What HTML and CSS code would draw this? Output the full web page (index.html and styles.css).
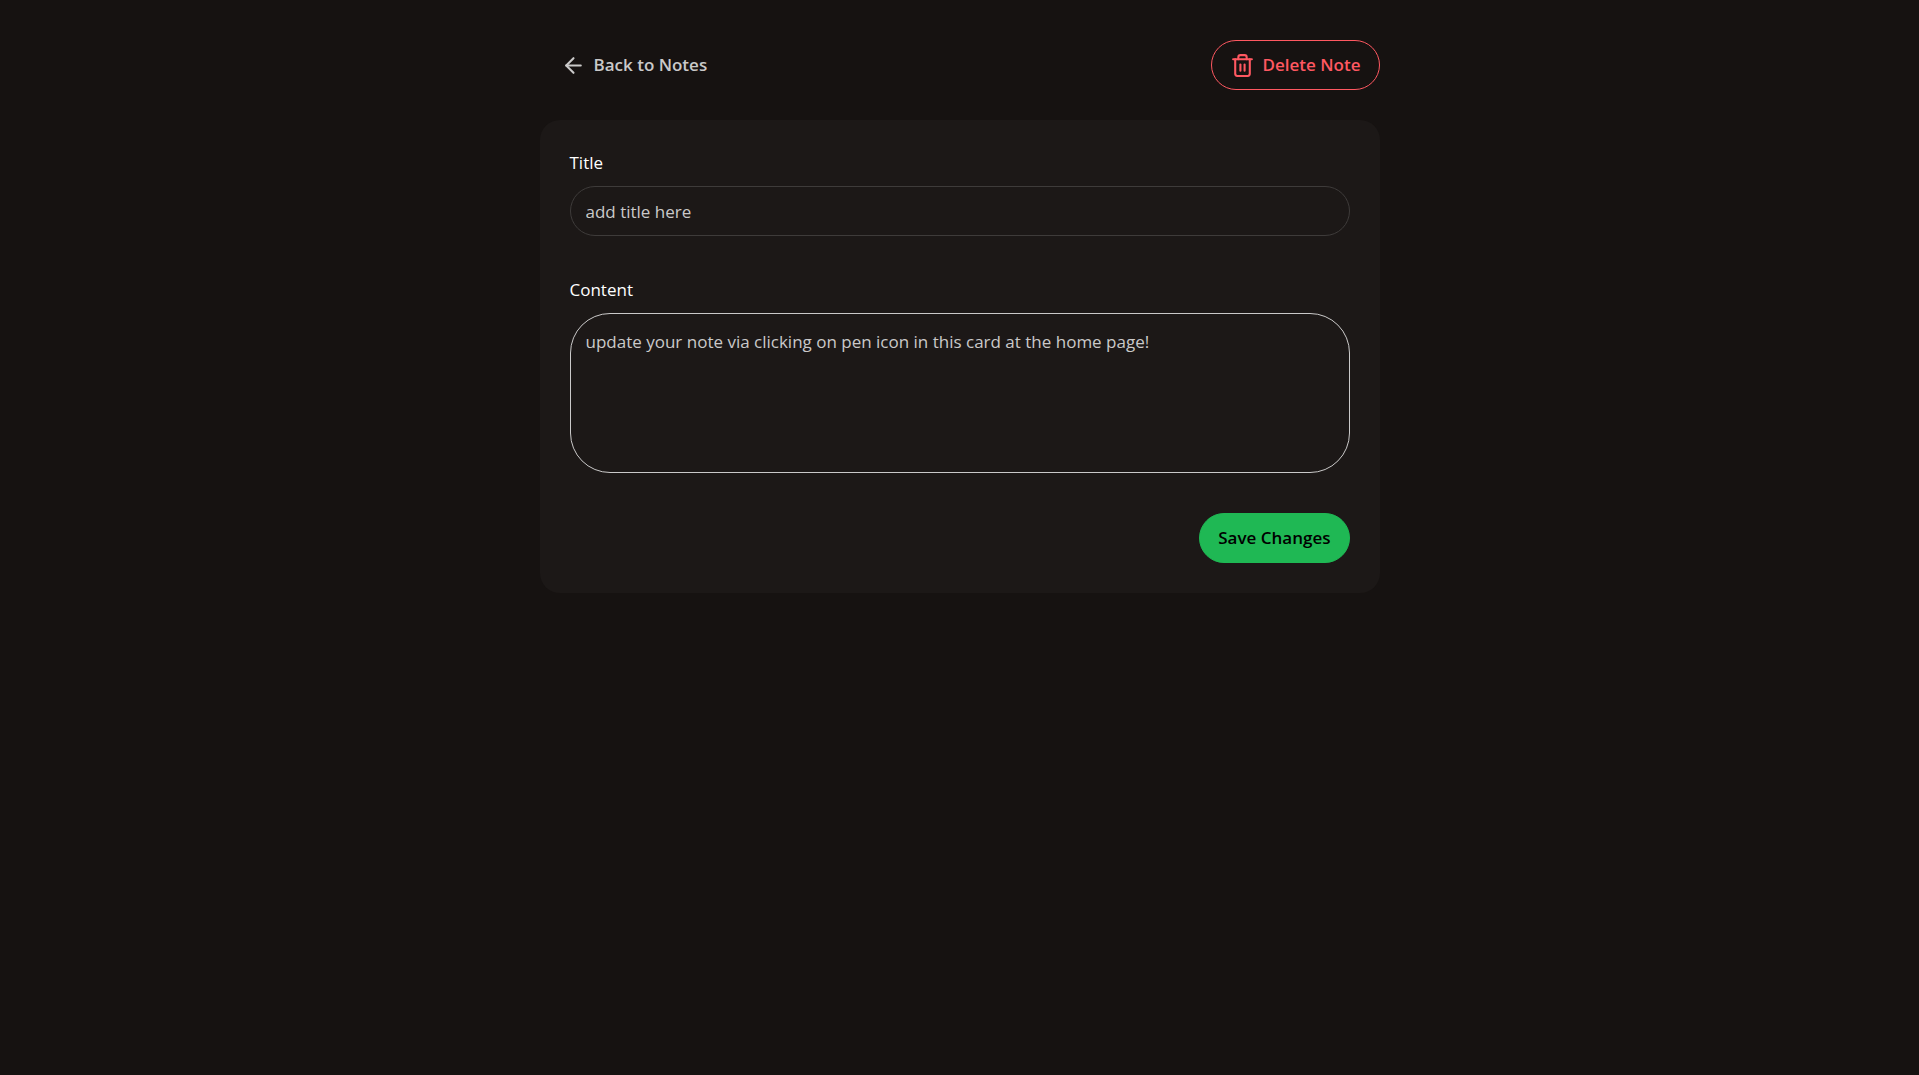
FILE: index.html
```html
<!DOCTYPE html>
<html lang="en">
<head>
  <meta charset="utf-8">
  <meta name="viewport" content="width=device-width, initial-scale=1">
  <title>Edit Note</title>
  <link rel="stylesheet" href="styles.css">
</head>
<body>
  <main class="container">
    <header class="toolbar">
      <a class="btn btn-ghost" href="/">
        <svg class="icon" viewBox="0 0 24 24" aria-hidden="true"><path d="m12 19-7-7 7-7"/><path d="M19 12H5"/></svg>
        Back to Notes
      </a>
      <button class="btn btn-error" type="button">
        <svg class="icon" viewBox="0 0 24 24" aria-hidden="true"><path d="M3 6h18"/><path d="M19 6v14c0 1-1 2-2 2H7c-1 0-2-1-2-2V6"/><path d="M8 6V4c0-1 1-2 2-2h4c1 0 2 1 2 2v2"/><path d="M10 11v6"/><path d="M14 11v6"/></svg>
        Delete Note
      </button>
    </header>
    <form class="card">
      <div class="field">
        <label class="label" for="title">Title</label>
        <input class="input" id="title" type="text" value="add title here">
      </div>
      <div class="field">
        <label class="label" for="content">Content</label>
        <textarea class="input textarea" id="content">update your note via clicking on pen icon in this card at the home page!</textarea>
      </div>
      <div class="actions">
        <button class="btn btn-primary" type="submit">Save Changes</button>
      </div>
    </form>
  </main>
</body>
</html>
```
FILE: styles.css
```css
* {
  box-sizing: border-box;
}

body {
  margin: 0;
  min-height: 100vh;
  background: #161211;
  color: #cac9c9;
  font-family: "Segoe UI", "Open Sans", "Noto Sans", sans-serif;
  font-size: 17px;
  line-height: 24px;
}

.container {
  max-width: 840px;
  margin: 0 auto;
  padding: 40px 0;
}

.toolbar {
  display: flex;
  align-items: center;
  justify-content: space-between;
  margin-bottom: 30px;
}

.btn {
  display: inline-flex;
  align-items: center;
  justify-content: center;
  gap: 8px;
  height: 50px;
  padding: 0 18px;
  border: 1px solid transparent;
  border-radius: 25px;
  background: transparent;
  color: inherit;
  font: inherit;
  font-weight: 600;
  text-decoration: none;
  white-space: nowrap;
  cursor: pointer;
}

.btn-ghost {
  padding: 0 20px;
}

.btn-error {
  border-color: #ff5861;
  color: #ff5861;
}

.btn-primary {
  border-color: #1fb854;
  background: #1fb854;
  color: #000;
}

.icon {
  width: 25px;
  height: 25px;
  fill: none;
  stroke: currentColor;
  stroke-width: 2;
  stroke-linecap: round;
  stroke-linejoin: round;
}

.card {
  padding: 30px;
  border-radius: 20px;
  background: #1c1817;
}

.field {
  display: flex;
  flex-direction: column;
  gap: 10px;
}

.field + .field {
  margin-top: 41px;
}

.label {
  padding: 1px 0;
  color: #fff;
}

.input {
  width: 100%;
  height: 50px;
  padding: 0 15px;
  border: 1px solid #3e3b3a;
  border-radius: 25px;
  outline: none;
  background: transparent;
  color: inherit;
  font: inherit;
}

.textarea {
  display: block;
  height: 160px;
  padding: 16px 15px;
  border-color: #cac9c9;
  border-radius: 40px;
  resize: none;
}

.actions {
  display: flex;
  justify-content: flex-end;
  margin-top: 40px;
}
```
